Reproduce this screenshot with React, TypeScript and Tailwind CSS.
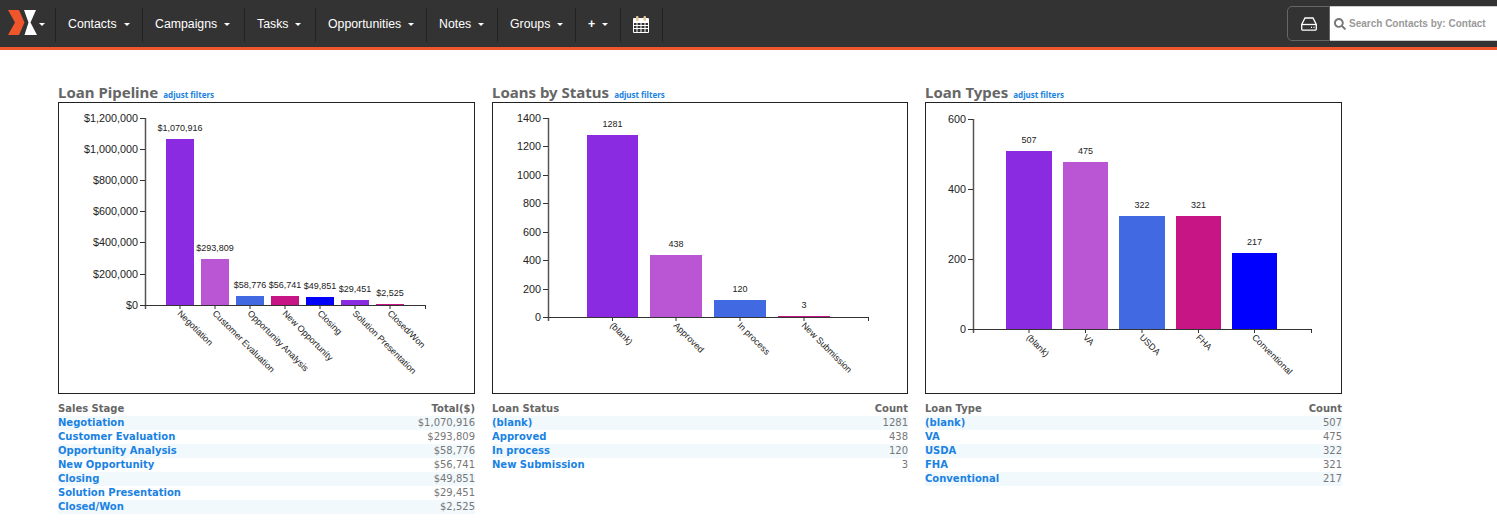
import { FaSearch } from "react-icons/fa";

const PURPLE = "#8a2be2";
const ORCHID = "#ba55d3";
const ROYAL = "#4169e1";
const MAGENTA = "#c71585";
const BLUE = "#0000ff";
const COLORS = [PURPLE, ORCHID, ROYAL, MAGENTA, BLUE, PURPLE, MAGENTA];

const NAV = [
  { label: "Contacts", width: "w-[87px]" },
  { label: "Campaigns", width: "w-[102px]" },
  { label: "Tasks", width: "w-[71px]" },
  { label: "Opportunities", width: "w-[111px]" },
  { label: "Notes", width: "w-[71px]" },
  { label: "Groups", width: "w-[78px]" },
  { label: "+", width: "w-[45px]" },
];

interface Bar {
  label: string;
  value: string;
  x: number;
  w: number;
  top: number;
}

interface ChartDef {
  title: string;
  boxW: number;
  axisX: number;
  axisEnd: number;
  zeroY: number;
  ticks: { label: string; y: number }[];
  bars: Bar[];
  colHead: string;
  valHead: string;
  rows: [string, string][];
}

const CHARTS: ChartDef[] = [
  {
    title: "Loan Pipeline",
    boxW: 417,
    axisX: 87,
    axisEnd: 368,
    zeroY: 203,
    ticks: [
      { label: "$1,200,000", y: 16 },
      { label: "$1,000,000", y: 47 },
      { label: "$800,000", y: 78 },
      { label: "$600,000", y: 109 },
      { label: "$400,000", y: 140 },
      { label: "$200,000", y: 172 },
      { label: "$0", y: 203 },
    ],
    bars: [
      { label: "Negotiation", value: "$1,070,916", x: 108, w: 28, top: 37 },
      { label: "Customer Evaluation", value: "$293,809", x: 143, w: 28, top: 157 },
      { label: "Opportunity Analysis", value: "$58,776", x: 178, w: 28, top: 194 },
      { label: "New Opportunity", value: "$56,741", x: 213, w: 28, top: 194 },
      { label: "Closing", value: "$49,851", x: 248, w: 28, top: 195 },
      { label: "Solution Presentation", value: "$29,451", x: 283, w: 28, top: 198 },
      { label: "Closed/Won", value: "$2,525", x: 318, w: 28, top: 202 },
    ],
    colHead: "Sales Stage",
    valHead: "Total($)",
    rows: [
      ["Negotiation", "$1,070,916"],
      ["Customer Evaluation", "$293,809"],
      ["Opportunity Analysis", "$58,776"],
      ["New Opportunity", "$56,741"],
      ["Closing", "$49,851"],
      ["Solution Presentation", "$29,451"],
      ["Closed/Won", "$2,525"],
    ],
  },
  {
    title: "Loans by Status",
    boxW: 416,
    axisX: 56,
    axisEnd: 377,
    zeroY: 215,
    ticks: [
      { label: "1400", y: 16 },
      { label: "1200", y: 44 },
      { label: "1000", y: 73 },
      { label: "800", y: 101 },
      { label: "600", y: 130 },
      { label: "400", y: 158 },
      { label: "200", y: 187 },
      { label: "0", y: 215 },
    ],
    bars: [
      { label: "(blank)", value: "1281", x: 95, w: 51, top: 33 },
      { label: "Approved", value: "438", x: 158, w: 52, top: 153 },
      { label: "In process", value: "120", x: 222, w: 52, top: 198 },
      { label: "New Submission", value: "3", x: 286, w: 52, top: 214 },
    ],
    colHead: "Loan Status",
    valHead: "Count",
    rows: [
      ["(blank)", "1281"],
      ["Approved", "438"],
      ["In process", "120"],
      ["New Submission", "3"],
    ],
  },
  {
    title: "Loan Types",
    boxW: 417,
    axisX: 48,
    axisEnd: 387,
    zeroY: 227,
    ticks: [
      { label: "600", y: 17 },
      { label: "400", y: 87 },
      { label: "200", y: 157 },
      { label: "0", y: 227 },
    ],
    bars: [
      { label: "(blank)", value: "507", x: 81, w: 46, top: 49 },
      { label: "VA", value: "475", x: 138, w: 45, top: 60 },
      { label: "USDA", value: "322", x: 194, w: 46, top: 114 },
      { label: "FHA", value: "321", x: 251, w: 45, top: 114 },
      { label: "Conventional", value: "217", x: 307, w: 45, top: 151 },
    ],
    colHead: "Loan Type",
    valHead: "Count",
    rows: [
      ["(blank)", "507"],
      ["VA", "475"],
      ["USDA", "322"],
      ["FHA", "321"],
      ["Conventional", "217"],
    ],
  },
];

function Caret() {
  return <span className="inline-block w-0 h-0 border-x-[3px] border-x-transparent border-t-[3px] border-t-white" />;
}

function Logo() {
  return (
    <svg width="30" height="25" viewBox="0 0 30 25" className="shrink-0 -mt-[4px]">
      <polygon points="0,0 11,0 16.500,12.500 11,25 0,25 7,12.500" fill="#f0562b" />
      <polygon points="16,0 28,0 22.500,12.500 29,25 16.500,25 20.500,12.500" fill="#ffffff" />
    </svg>
  );
}

function CalendarIcon() {
  return (
    <svg width="16" height="17" viewBox="0 0 16 17" fill="#ffffff">
      <path fillRule="evenodd" d="M1 2h14a1 1 0 0 1 1 1v13a1 1 0 0 1-1 1H1a1 1 0 0 1-1-1V3a1 1 0 0 1 1-1zM1 7v2h2.500V7zM4.500 7v2h3V7zM8.500 7v2h3V7zM12.500 7v2H15V7zM1 10v2h2.500v-2zM4.500 10v2h3v-2zM8.500 10v2h3v-2zM12.500 10v2H15v-2zM1 13v3h2.500v-3zM4.500 13v3h3v-3zM8.500 13v3h3v-3zM12.500 13v3H15v-3z" />
      <rect x="3" y="0" width="2.500" height="5" rx="1" fill="#e8c79a" />
      <rect x="10.500" y="0" width="2.500" height="5" rx="1" fill="#e8c79a" />
    </svg>
  );
}

function DriveIcon() {
  return (
    <svg width="16" height="14" viewBox="0 0 16 14" fill="none" stroke="#ffffff" strokeWidth="1.300">
      <path d="M4 1h8l3.300 6.500V12a1.200 1.200 0 0 1-1.200 1.200H1.900A1.200 1.200 0 0 1 .7 12V7.500z" />
      <path d="M.7 7.500h14.600" />
      <path d="M10 10.300h1M12.500 10.300h1" />
    </svg>
  );
}

function Chart({ def }: { def: ChartDef }) {
  const w = def.boxW - 2;
  return (
    <svg width={w} height={290} className="block">
      <g fontFamily="'Liberation Sans', Arial, sans-serif" transform="translate(-1 -1)">
        {def.bars.map((b, i) => (
          <g key={b.label}>
            <rect x={b.x} y={b.top} width={b.w} height={def.zeroY - b.top} fill={COLORS[i]} />
            <text x={b.x + b.w / 2} y={b.top - 8} textAnchor="middle" fontSize="9" fill="#222222">
              {b.value}
            </text>
            <line x1={b.x + b.w / 2} x2={b.x + b.w / 2} y1={def.zeroY} y2={def.zeroY + 4} stroke="#333333" />
            <text
              transform={`translate(${b.x + b.w / 2 - 3} ${def.zeroY + 9}) rotate(45)`}
              fontSize="9"
              fill="#222222"
            >
              {b.label}
            </text>
          </g>
        ))}
        <line x1={def.axisX + 0.5} x2={def.axisX + 0.5} y1={def.ticks[0].y} y2={def.zeroY + 4} stroke="#555555" strokeWidth="1.500" />
        <line x1={def.axisX} x2={def.axisEnd} y1={def.zeroY + 0.5} y2={def.zeroY + 0.5} stroke="#333333" strokeWidth="1.200" />
        <line x1={def.axisEnd - 0.5} x2={def.axisEnd - 0.5} y1={def.zeroY} y2={def.zeroY + 4} stroke="#333333" />
        {def.ticks.map((t) => (
          <g key={t.label}>
            <line x1={def.axisX - 5} x2={def.axisX} y1={t.y + 0.5} y2={t.y + 0.5} stroke="#333333" />
            <text x={def.axisX - 7} y={t.y + 4} textAnchor="end" fontSize="10.800" fill="#222222">
              {t.label}
            </text>
          </g>
        ))}
      </g>
    </svg>
  );
}

function Panel({ def }: { def: ChartDef }) {
  return (
    <div className="shrink-0" style={{ width: def.boxW }}>
      <div className="flex items-baseline gap-[5px] h-[21px] font-['Noto_Sans',Verdana,sans-serif]">
        <h2 className="text-[15px] leading-[22px] font-bold text-[#666666]">{def.title}</h2>
        <a className="text-[8px] font-bold text-[#1a82e2]">adjust filters</a>
      </div>
      <div className="border border-[#222222] h-[292px] bg-white">
        <Chart def={def} />
      </div>
      <table className="w-full mt-2 font-['DejaVu_Sans',Verdana,sans-serif] text-[10px] leading-[14px]">
        <thead>
          <tr className="font-bold text-[#666666]">
            <th className="text-left font-bold p-0">{def.colHead}</th>
            <th className="text-right font-bold p-0">{def.valHead}</th>
          </tr>
        </thead>
        <tbody>
          {def.rows.map(([name, val], i) => (
            <tr key={name} className={i % 2 === 0 ? "bg-[#f2f9fd]" : "bg-white"}>
              <td className="p-0 font-bold text-[#1a82e2]">{name}</td>
              <td className="p-0 text-right text-[#777777]">{val}</td>
            </tr>
          ))}
        </tbody>
      </table>
    </div>
  );
}

export default function App() {
  return (
    <div className="w-[1497px] h-[529px] overflow-hidden bg-white">
      <nav className="h-[50px] pt-[2px] bg-[#333333] border-b-[3px] border-[#f0562b] flex items-center font-['Liberation_Sans',Arial,sans-serif] text-[12.300px] text-white">
        <div className="flex items-center gap-[1px] w-[55px] h-[34px] pl-[8px]">
          <Logo />
          <Caret />
        </div>
        {NAV.map((n) => (
          <div key={n.label} className={`flex items-center gap-[7px] h-[34px] pl-[12px] border-l border-[#222222] ${n.width}`}>
            <span className={n.label === "+" ? "font-bold" : ""}>{n.label}</span>
            <Caret />
          </div>
        ))}
        <div className="flex items-center justify-center w-[43px] h-[34px] pr-[2px] border-x border-[#222222]">
          <CalendarIcon />
        </div>
        <div className="ml-auto flex items-stretch h-[35px] -mt-[2px]">
          <div className="w-[43px] flex items-center justify-center border border-[#666666] rounded-l-[5px]">
            <DriveIcon />
          </div>
          <div className="w-[167px] bg-white border-y border-[#cccccc] flex items-center pl-[4px] gap-[3px] text-[10px] font-bold text-[#999999] whitespace-nowrap">
            <FaSearch className="w-[12px] h-[12px] text-[#777777]" />
            <span>Search Contacts by: Contact</span>
          </div>
        </div>
      </nav>
      <main className="flex gap-[17px] pl-[58px] pt-[31px]">
        {CHARTS.map((c) => (
          <Panel key={c.title} def={c} />
        ))}
      </main>
    </div>
  );
}
